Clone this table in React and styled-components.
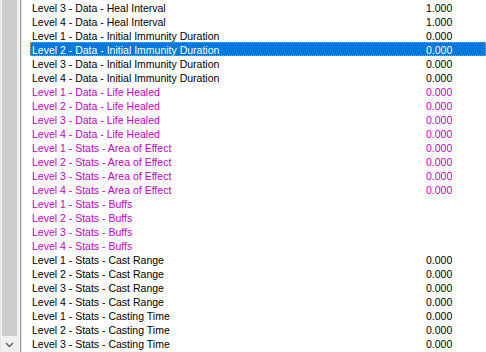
import React from 'react';
import styled, { createGlobalStyle } from 'styled-components';

const GlobalStyle = createGlobalStyle`
    html, body {
        margin: 0;
        padding: 0;
        background: #ffffff;
    }
    body {
        font-family: 'Liberation Sans', Arial, sans-serif;
    }
`;

const MODIFIED = '#c400c4';

const fields = [
    { name: 'Level 3 - Data - Heal Interval', value: '1.000' },
    { name: 'Level 4 - Data - Heal Interval', value: '1.000' },
    { name: 'Level 1 - Data - Initial Immunity Duration', value: '0.000' },
    { name: 'Level 2 - Data - Initial Immunity Duration', value: '0.000', selected: true },
    { name: 'Level 3 - Data - Initial Immunity Duration', value: '0.000' },
    { name: 'Level 4 - Data - Initial Immunity Duration', value: '0.000' },
    { name: 'Level 1 - Data - Life Healed', value: '0.000', modified: true },
    { name: 'Level 2 - Data - Life Healed', value: '0.000', modified: true },
    { name: 'Level 3 - Data - Life Healed', value: '0.000', modified: true },
    { name: 'Level 4 - Data - Life Healed', value: '0.000', modified: true },
    { name: 'Level 1 - Stats - Area of Effect', value: '0.000', modified: true },
    { name: 'Level 2 - Stats - Area of Effect', value: '0.000', modified: true },
    { name: 'Level 3 - Stats - Area of Effect', value: '0.000', modified: true },
    { name: 'Level 4 - Stats - Area of Effect', value: '0.000', modified: true },
    { name: 'Level 1 - Stats - Buffs', value: '', modified: true },
    { name: 'Level 2 - Stats - Buffs', value: '', modified: true },
    { name: 'Level 3 - Stats - Buffs', value: '', modified: true },
    { name: 'Level 4 - Stats - Buffs', value: '', modified: true },
    { name: 'Level 1 - Stats - Cast Range', value: '0.000' },
    { name: 'Level 2 - Stats - Cast Range', value: '0.000' },
    { name: 'Level 3 - Stats - Cast Range', value: '0.000' },
    { name: 'Level 4 - Stats - Cast Range', value: '0.000' },
    { name: 'Level 1 - Stats - Casting Time', value: '0.000' },
    { name: 'Level 2 - Stats - Casting Time', value: '0.000' },
    { name: 'Level 3 - Stats - Casting Time', value: '0.000' },
];

function App() {
    return (
        <>
            <GlobalStyle />
            <Window>
                <ScrollBar>
                    <Thumb />
                    <ArrowButton>
                        <svg width='9' height='6' viewBox='0 0 9 6'>
                            <path d='M1 1 L4.5 4.5 L8 1' fill='none' stroke='#606060' strokeWidth='1.4' />
                        </svg>
                    </ArrowButton>
                </ScrollBar>
                <Splitter />
                <ListView>
                    {fields.map((field) => (
                        <Row key={field.name} $selected={field.selected} $modified={field.modified}>
                            <NameCell>{field.name}</NameCell>
                            <ValueCell>{field.value}</ValueCell>
                        </Row>
                    ))}
                </ListView>
            </Window>
        </>
    );
}

const Window = styled.div`
    display: flex;
    width: 486px;
    height: 352px;
    overflow: hidden;
    background: #ffffff;
`;

const ScrollBar = styled.div`
    display: flex;
    flex-direction: column;
    flex-shrink: 0;
    width: 17px;
    height: 352px;
    padding-left: 1px;
    box-sizing: border-box;
    background: #f0f0f0;
    border-left: 1px solid #e8e8e8;
`;

const Thumb = styled.div`
    flex: 1;
    background: #cdcdcd;
`;

const ArrowButton = styled.div`
    flex-shrink: 0;
    height: 16px;
    display: flex;
    align-items: center;
    justify-content: center;
    background: #f0f0f0;
    padding-top: 2px;
    box-sizing: border-box;
`;

const Splitter = styled.div`
    flex-shrink: 0;
    width: 3px;
    background: #f0f0f0;
    border-right: 1px solid #a0a0a0;
`;

const ListView = styled.div`
    flex: 1;
    display: flex;
    flex-direction: column;
    padding-left: 8px;
    border-left: 1px solid #e3e3e3;
`;

const Row = styled.div`
    display: flex;
    flex-shrink: 0;
    height: 14px;
    box-sizing: border-box;
    font-size: 10.5px;
    line-height: 14px;
    padding-top: 1px;
    color: ${({ $selected, $modified }) => ($selected ? '#ffffff' : $modified ? MODIFIED : '#000000')};
    background: ${({ $selected }) => ($selected ? '#0078d7' : 'transparent')};
    outline: ${({ $selected }) => ($selected ? '1px dotted #ff8728' : 'none')};
    outline-offset: -1px;
`;

const NameCell = styled.span`
    width: 394px;
    padding-left: 2px;
    white-space: nowrap;
`;

const ValueCell = styled.span`
    white-space: nowrap;
`;

export default App;
